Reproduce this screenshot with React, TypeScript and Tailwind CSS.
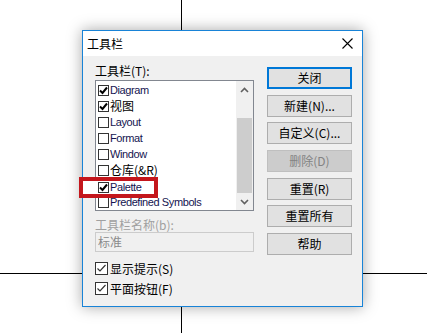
import React from "react"

const cjk = { fontFamily: '"Noto Sans CJK SC", "Liberation Sans", sans-serif' }
const latin = { fontFamily: '"Liberation Sans", "Noto Sans CJK SC", sans-serif' }

function ListCheck({ checked }: { checked: boolean }) {
  return (
    <span className="w-[11px] h-[11px] border border-[#333] bg-white flex items-center justify-center shrink-0">
      {checked && (
        <svg width="9" height="9" viewBox="0 0 9 9">
          <polyline points="1,4.5 3.5,7 8,1.5" fill="none" stroke="#000" strokeWidth="2" />
        </svg>
      )}
    </span>
  )
}

function FlatCheck() {
  return (
    <span className="w-[13px] h-[13px] border border-[#333] bg-white flex items-center justify-center shrink-0">
      <svg width="11" height="11" viewBox="0 0 11 11">
        <polyline points="1.5,5.5 4,8 9.5,2" fill="none" stroke="#333" strokeWidth="1.2" />
      </svg>
    </span>
  )
}

const items: { label: string; checked: boolean; zh?: boolean }[] = [
  { label: "Diagram", checked: true },
  { label: "视图", checked: true, zh: true },
  { label: "Layout", checked: false },
  { label: "Format", checked: false },
  { label: "Window", checked: false },
  { label: "仓库(&R)", checked: false, zh: true },
  { label: "Palette", checked: true },
  { label: "Predefined Symbols", checked: false },
]

const buttons = ["新建(N)...", "自定义(C)..."]

export default function App() {
  return (
    <div className="relative w-[427px] h-[333px] bg-white overflow-hidden">
      {/* desktop crosshair lines */}
      <div className="absolute left-[181px] top-0 w-px h-full bg-black" />
      <div className="absolute top-[273px] left-0 h-px w-full bg-black" />

      {/* dialog */}
      <div className="absolute left-[82px] top-[30px] w-[281px] h-[277px] border border-[#1883d7] bg-[#f0f0f0] shadow-[0_0_14px_rgba(0,0,0,0.35)] flex flex-col">
        <div className="h-[25px] bg-white flex items-center justify-between pl-[4px] pr-[9px] shrink-0">
          <span className="text-[12px] text-black" style={cjk}>工具栏</span>
          <svg width="11" height="11" viewBox="0 0 11 11">
            <path d="M0.5 0.5 L10.5 10.5 M10.5 0.5 L0.5 10.5" stroke="#000" strokeWidth="1.1" />
          </svg>
        </div>

        <div className="flex flex-1 pl-[12px] pr-[9px] gap-[13px]">
          {/* left column */}
          <div className="w-[159px] flex flex-col pt-[8px]">
            <div className="h-[14px] leading-[14px] text-[12px] text-black" style={cjk}>工具栏(T):</div>
            <div className="mt-[2px] h-[131px] border border-[#828790] bg-white flex">
              <div className="flex-1 flex flex-col pt-[1px] pl-[2px]">
                {items.map((it) => (
                  <div key={it.label} className="h-[16px] flex items-center gap-[1px]">
                    <ListCheck checked={it.checked} />
                    <span
                      className={it.zh ? "text-[12px] text-black leading-[16px]" : "text-[11px] tracking-[-0.4px] text-[#141450] leading-[16px]"}
                      style={it.zh ? cjk : latin}
                    >
                      {it.label}
                    </span>
                  </div>
                ))}
              </div>
              <div className="w-[17px] bg-[#f0f0f0] flex flex-col">
                <div className="h-[17px] flex items-center justify-center">
                  <svg width="9" height="6" viewBox="0 0 9 6">
                    <polyline points="1,5 4.5,1.5 8,5" fill="none" stroke="#606060" strokeWidth="1.6" />
                  </svg>
                </div>
                <div className="h-[20px]" />
                <div className="h-[75px] mx-[1px] bg-[#cdcdcd]" />
                <div className="flex-1 flex items-center justify-center">
                  <svg width="9" height="6" viewBox="0 0 9 6">
                    <polyline points="1,1 4.5,4.5 8,1" fill="none" stroke="#606060" strokeWidth="1.6" />
                  </svg>
                </div>
              </div>
            </div>
            <div className="mt-[7px] h-[14px] leading-[14px] text-[12px] text-[#a0a0a0]" style={cjk}>工具栏名称(b):</div>
            <div className="h-[20px] border border-[#cccccc] bg-[#f0f0f0] flex items-center pl-[2px] text-[12px] text-[#8a8a8a]" style={cjk}>
              标准
            </div>
            <div className="mt-[10px] flex flex-col gap-[7px]">
              <div className="h-[13px] flex items-center gap-[2px]">
                <FlatCheck />
                <span className="text-[12px] text-black" style={cjk}>显示提示(S)</span>
              </div>
              <div className="h-[13px] flex items-center gap-[2px]">
                <FlatCheck />
                <span className="text-[12px] text-black" style={cjk}>平面按钮(F)</span>
              </div>
            </div>
          </div>

          {/* right column */}
          <div className="w-[85px] flex flex-col pt-[11px] gap-[5.67px]">
            <div className="h-[22px] border-2 border-[#0078d7] bg-[#e1e1e1] flex items-center justify-center text-[12px] text-black" style={cjk}>关闭</div>
            {buttons.map((b) => (
              <div key={b} className="h-[22px] border border-[#adadad] bg-[#e1e1e1] flex items-center justify-center text-[12px] text-black" style={cjk}>{b}</div>
            ))}
            <div className="h-[22px] border border-[#bfbfbf] bg-[#cccccc] flex items-center justify-center text-[12px] text-[#838383]" style={cjk}>删除(D)</div>
            {["重置(R)", "重置所有", "帮助"].map((b) => (
              <div key={b} className="h-[22px] border border-[#adadad] bg-[#e1e1e1] flex items-center justify-center text-[12px] text-black" style={cjk}>{b}</div>
            ))}
          </div>
        </div>
      </div>

      {/* red highlight annotation */}
      <div className="absolute left-[79px] top-[177px] w-[79px] h-[21px] border-4 border-[#c4161c] bg-white flex items-center pl-[15px] gap-[1px]">
        <ListCheck checked={true} />
        <span className="text-[11px] tracking-[-0.4px] text-[#141450]" style={latin}>Palette</span>
      </div>
    </div>
  )
}
